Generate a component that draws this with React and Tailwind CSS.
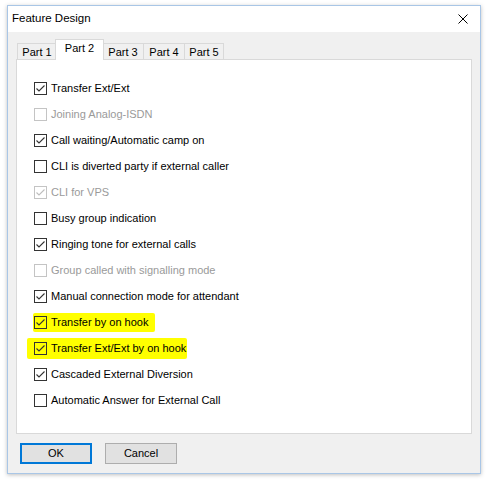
import React from 'react';

const options = [
    { label: 'Transfer Ext/Ext', checked: true },
    { label: 'Joining Analog-ISDN', checked: false, disabled: true },
    { label: 'Call waiting/Automatic camp on', checked: true },
    { label: 'CLI is diverted party if external caller', checked: false },
    { label: 'CLI for VPS', checked: true, disabled: true },
    { label: 'Busy group indication', checked: false },
    { label: 'Ringing tone for external calls', checked: true },
    { label: 'Group called with signalling mode', checked: false, disabled: true },
    { label: 'Manual connection mode for attendant', checked: true },
    { label: 'Transfer by on hook', checked: true, mark: 'short' },
    { label: 'Transfer Ext/Ext by on hook', checked: true, mark: 'long' },
    { label: 'Cascaded External Diversion', checked: true },
    { label: 'Automatic Answer for External Call', checked: false },
];

const tabs = ['Part 1', 'Part 2', 'Part 3', 'Part 4', 'Part 5'];

function CheckBox({ checked, disabled, clear }) {
    return (
        <span
            className={`w-[13px] h-[13px] shrink-0 border flex items-center justify-center ${
                disabled ? 'border-[#c4c4c4]' : 'border-[#333333]'
            } ${clear ? 'bg-transparent' : 'bg-white'}`}
        >
            {checked && (
                <svg width="11" height="11" viewBox="0 0 11 11">
                    <polyline
                        points="1.5,5.5 4,8 9.5,2.5"
                        fill="none"
                        stroke={disabled ? '#bdbdbd' : '#333333'}
                        strokeWidth="1.1"
                    />
                </svg>
            )}
        </span>
    );
}

function Row({ label, checked, disabled, mark }) {
    const content = (
        <>
            <CheckBox checked={checked} disabled={disabled} clear={!!mark} />
            <span className={disabled ? 'text-[#9a9a9a]' : 'text-black'}>{label}</span>
        </>
    );

    return (
        <div className="h-[26px] flex items-center">
            {mark === 'short' && (
                <div className="flex items-center gap-[4px] bg-[#ffff00] -ml-[1px] pl-[1px] pr-[7px] h-[19px] rounded-[2px]">
                    {content}
                </div>
            )}
            {mark === 'long' && (
                <div className="flex items-center gap-[4px] bg-[#ffff00] -ml-[7px] pl-[7px] pr-[1px] h-[21px] rounded-[2px]">
                    {content}
                </div>
            )}
            {!mark && <div className="flex items-center gap-[4px]">{content}</div>}
        </div>
    );
}

export default function App() {
    return (
        <div
            className="w-[490px] h-[485px] bg-white pt-[5px] pl-[7px] text-[11px] leading-none"
            style={{ fontFamily: '"Liberation Sans", Arial, sans-serif' }}
        >
            {/* Window */}
            <div className="w-[474px] h-[469px] border border-[#a9c6e6] bg-[#f0f0f0] flex flex-col shadow-[0_1px_4px_rgba(0,0,0,0.25)]">
                {/* Title bar */}
                <div className="h-[26px] bg-white flex items-center justify-between pl-[4px] pr-[12px]">
                    <span className="text-[11.5px] text-black">Feature Design</span>
                    <svg width="10" height="10" viewBox="0 0 10 10">
                        <path d="M0.5 0.5 L9.5 9.5 M9.5 0.5 L0.5 9.5" stroke="#000" strokeWidth="1" />
                    </svg>
                </div>

                {/* Tabs */}
                <div className="mt-[7px] ml-[9px] h-[20px] flex items-start relative z-10">
                    {tabs.map((t, i) =>
                        i === 1 ? (
                            <div
                                key={t}
                                className="h-[21px] w-[49px] -mx-[2px] bg-white border border-b-0 border-[#d9d9d9] flex items-center justify-center pb-[3px] relative z-10"
                            >
                                {t}
                            </div>
                        ) : (
                            <div
                                key={t}
                                className={`mt-[4px] h-[16px] border border-b-0 border-[#d9d9d9] bg-[#f0f0f0] flex items-center justify-center pt-[1px] ${
                                    i === 0 ? 'w-[40px]' : i === 2 ? 'w-[42px]' : i === 3 ? 'w-[42px] -ml-px' : 'w-[40px] -ml-px'
                                }`}
                            >
                                {t}
                            </div>
                        )
                    )}
                </div>

                {/* Panel */}
                <div className="ml-[8px] w-[456px] h-[375px] bg-white border border-[#d9d9d9] pt-[15px] pl-[17px]">
                    {options.map((o) => (
                        <Row key={o.label} {...o} />
                    ))}
                </div>

                {/* Buttons */}
                <div className="mt-[9px] ml-[12px] flex gap-[13px]">
                    <button className="w-[72px] h-[21px] bg-[#e1e1e1] border-2 border-[#0078d7] flex items-center justify-center text-black">
                        OK
                    </button>
                    <button className="w-[72px] h-[21px] bg-[#e1e1e1] border border-[#adadad] flex items-center justify-center text-black">
                        Cancel
                    </button>
                </div>
            </div>
        </div>
    );
}
